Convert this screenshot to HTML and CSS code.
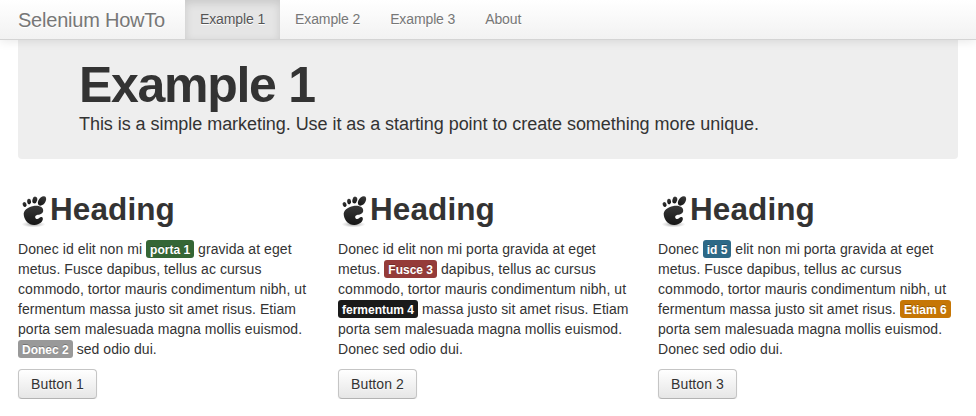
FILE: index.html
```html
<!DOCTYPE html>
<html lang="en">
<head>
<meta charset="utf-8">
<title>Selenium HowTo</title>
<link rel="stylesheet" href="styles.css">
</head>
<body>
<svg width="0" height="0" class="defs" aria-hidden="true">
  <defs>
    <radialGradient id="ground"><stop offset="0" stop-color="#777" stop-opacity=".75"/><stop offset="1" stop-color="#999" stop-opacity="0"/></radialGradient>
    <linearGradient id="ink" x1="0" y1="0" x2="0" y2="1"><stop offset="0" stop-color="#383838"/><stop offset="1" stop-color="#161616"/></linearGradient>
    <symbol id="foot" viewBox="0 0 32 32">
      <ellipse cx="15.5" cy="28.3" rx="12" ry="3.2" fill="url(#ground)"/>
      <g fill="url(#ink)">
        <ellipse cx="24" cy="4.9" rx="3.4" ry="5.3" transform="rotate(36 24 4.9)"/>
        <ellipse cx="16.8" cy="4" rx="2.4" ry="3.4" transform="rotate(14 16.8 4)"/>
        <ellipse cx="11.1" cy="5.6" rx="2" ry="2.8" transform="rotate(-10 11.1 5.6)"/>
        <ellipse cx="6.6" cy="8.5" rx="1.9" ry="2.4" transform="rotate(-25 6.6 8.5)"/>
        <path d="M25.2 14.4C25.2 10.5 20 9.2 15.5 10C9.6 11.2 5 14.4 5.8 19.2C6.6 24.9 11 29.1 16.5 28.9C21.4 28.7 25.4 25.2 24.8 22.2C24.2 20.5 22.2 20.9 21.2 22.1C19.9 23.6 17.8 23.4 17.3 21.8C16.8 20 18 19.2 19.6 18.8C22.9 18.2 25.2 17.4 25.2 14.4Z"/>
      </g>
    </symbol>
  </defs>
</svg>
<header class="navbar">
  <a class="brand">Selenium HowTo</a>
  <nav class="nav">
    <a class="nav-link active">Example 1</a>
    <a class="nav-link">Example 2</a>
    <a class="nav-link">Example 3</a>
    <a class="nav-link">About</a>
  </nav>
</header>
<main class="container">
  <section class="hero">
    <h1>Example 1</h1>
    <p>This is a simple marketing. Use it as a starting point to create something more unique.</p>
  </section>
  <div class="row">
    <section class="column">
      <h2><svg class="foot"><use href="#foot"/></svg>Heading</h2>
      <p>Donec id elit non mi <span class="label success">porta 1</span> gravida at eget metus. Fusce dapibus, tellus ac cursus commodo, tortor mauris condimentum nibh, ut fermentum massa justo sit amet risus. Etiam porta sem malesuada magna mollis euismod. <span class="label">Donec 2</span> sed odio dui.</p>
      <button class="btn">Button 1</button>
    </section>
    <section class="column">
      <h2><svg class="foot"><use href="#foot"/></svg>Heading</h2>
      <p>Donec id elit non mi porta gravida at eget metus. <span class="label important">Fusce 3</span> dapibus, tellus ac cursus commodo, tortor mauris condimentum nibh, ut <span class="label inverse">fermentum 4</span> massa justo sit amet risus. Etiam porta sem malesuada magna mollis euismod. Donec sed odio dui.</p>
      <button class="btn">Button 2</button>
    </section>
    <section class="column">
      <h2><svg class="foot"><use href="#foot"/></svg>Heading</h2>
      <p>Donec <span class="label info">id 5</span> elit non mi porta gravida at eget metus. Fusce dapibus, tellus ac cursus commodo, tortor mauris condimentum nibh, ut fermentum massa justo sit amet risus. <span class="label warning">Etiam 6</span> porta sem malesuada magna mollis euismod. Donec sed odio dui.</p>
      <button class="btn">Button 3</button>
    </section>
  </div>
</main>
</body>
</html>
```
FILE: styles.css
```css
* { box-sizing: border-box; }
body {
  margin: 0;
  background: #fff;
  color: #333;
  font: 14px/20px "Liberation Sans", Arial, sans-serif;
}
h1, h2, p { margin: 0; }
.defs { position: absolute; }
.navbar {
  position: relative;
  display: flex;
  height: 40px;
  padding-left: 18px;
  border-bottom: 1px solid #d4d4d4;
  background: linear-gradient(#fff, #f2f2f2);
  box-shadow: 0 1px 10px rgba(0, 0, 0, .1);
}
.brand {
  width: 167px;
  padding: 10px 0;
  color: #777;
  font-size: 20px;
  letter-spacing: -.22px;
  text-shadow: 0 1px 0 #fff;
  white-space: nowrap;
}
.nav { display: flex; }
.nav-link {
  padding: 9px 15px 10px;
  color: #777;
  letter-spacing: -.12px;
  text-shadow: 0 1px 0 #fff;
}
.nav-link.active {
  color: #555;
  background: #e5e5e5;
  box-shadow: inset 0 3px 8px rgba(0, 0, 0, .125);
}
.container { width: 940px; margin-left: 18px; }
.hero {
  height: 119px;
  padding: 20px 61px 0;
  border-radius: 0 0 4px 4px;
  background: #eee;
}
.hero h1 {
  font-size: 50px;
  line-height: 50px;
  letter-spacing: -1.3px;
}
.hero p {
  margin-top: -1px;
  font-size: 18px;
  line-height: 30px;
  letter-spacing: -.05px;
}
.row {
  display: grid;
  grid-template-columns: repeat(3, 300px);
  gap: 20px;
  margin-top: 30px;
}
.column h2 {
  display: flex;
  height: 40px;
  margin-bottom: 10px;
  font-size: 31.5px;
  line-height: 40px;
  letter-spacing: .1px;
}
.foot { width: 32px; height: 32px; margin-top: 7px; }
.column p { width: 296px; margin-bottom: 10px; letter-spacing: .06px; }
.label {
  display: inline-block;
  margin: -1px 0;
  padding: 3px 4px 1px;
  border-radius: 3px;
  background: #999;
  color: #fff;
  font-size: 12px;
  font-weight: bold;
  line-height: 14px;
  letter-spacing: 0;
  text-shadow: 0 -1px 0 rgba(0, 0, 0, .25);
  vertical-align: baseline;
  white-space: nowrap;
}
.success { background: #356635; }
.important { background: #953b39; }
.inverse { background: #1a1a1a; }
.info { background: #2d6987; }
.warning { background: #c67605; }
.btn {
  display: block;
  width: 79px;
  height: 30px;
  padding: 4px 12px;
  border: 1px solid #ccc;
  border-color: #c5c5c5 #c5c5c5 #b3b3b3;
  border-radius: 4px;
  background: linear-gradient(#fff, #e6e6e6);
  box-shadow: inset 0 1px 0 rgba(255, 255, 255, .2), 0 1px 2px rgba(0, 0, 0, .05);
  color: #333;
  font: inherit;
  letter-spacing: .08px;
  text-shadow: 0 1px 1px rgba(255, 255, 255, .75);
}
```
